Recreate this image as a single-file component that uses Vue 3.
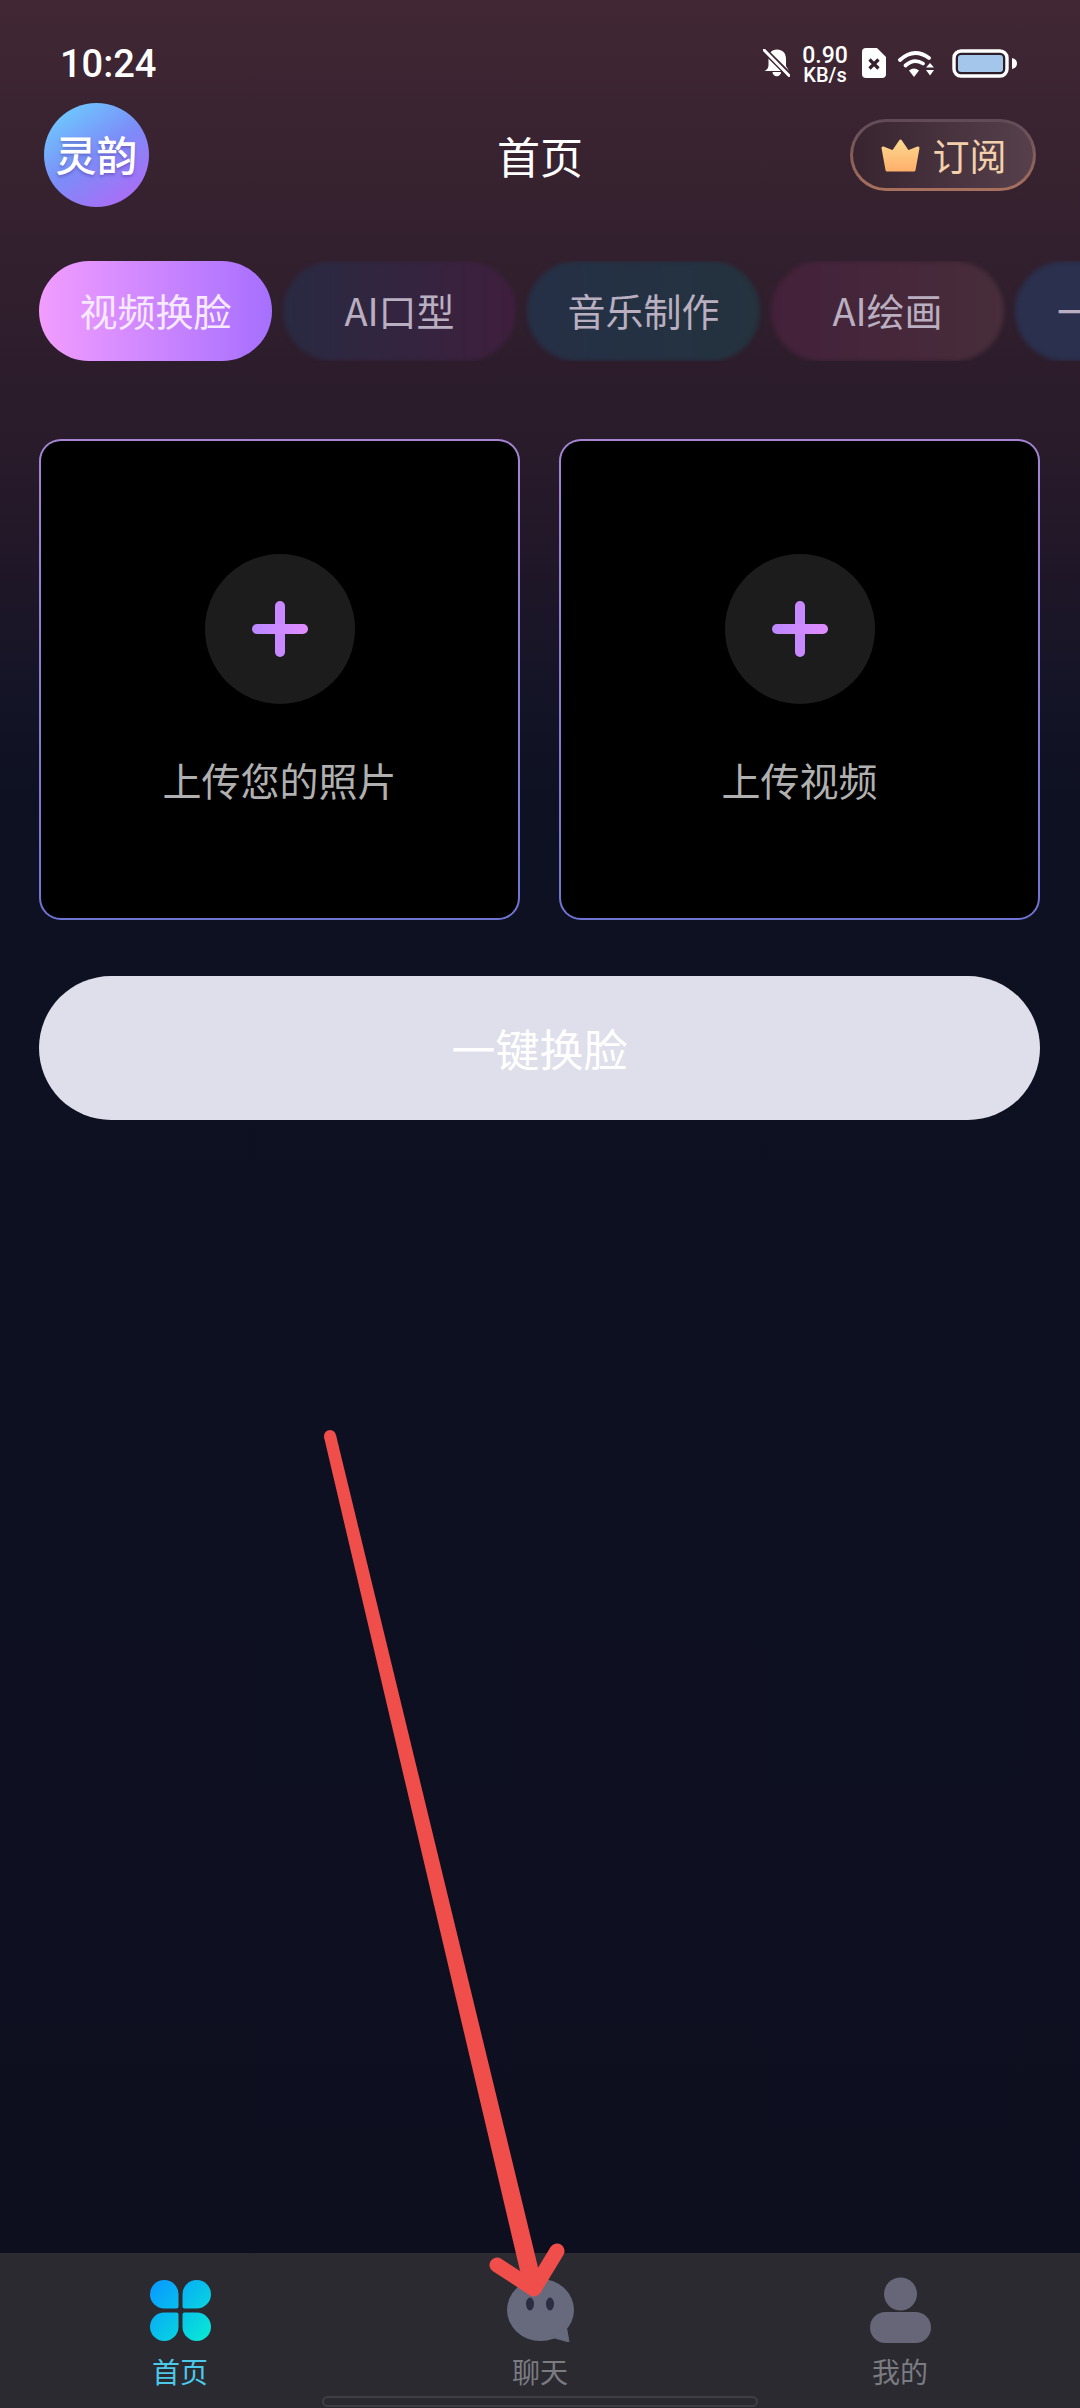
<template>
  <div class="page">
    <!-- status bar -->
    <div class="status-bar">
      <span class="time">10:24</span>
      <div class="status-icons">
        <svg class="ic-bell" width="27" height="28" viewBox="0 0 27 28">
          <path d="M14 0.500c5.500 0 9 3.500 9 9.500v7l3 5H1.500c2.500-1 4-3 4-6v-6c0-5.500 3-9.500 8.500-9.500z" fill="#fff" />
          <path d="M9.500 23h8.500a4.200 4.200 0 0 1-8.500 0z" fill="#fff" />
          <path d="M-1-1L27 27" stroke="#3c2531" stroke-width="6" />
          <path d="M1 1L26 26.500" stroke="#fff" stroke-width="3" stroke-linecap="round" />
        </svg>
        <div class="speed">
          <span class="speed-num">0.90</span>
          <span class="speed-unit">KB/s</span>
        </div>
        <svg class="ic-sim" width="24" height="30" viewBox="0 0 24 30">
          <path d="M4 0h11l9 9v17a4 4 0 0 1-4 4H4a4 4 0 0 1-4-4V4a4 4 0 0 1 4-4z" fill="#fff" />
          <path d="M7.500 11.500l9 9M16.500 11.500l-9 9" stroke="#35212c" stroke-width="3.200" />
        </svg>
        <svg class="ic-wifi" width="37" height="27" viewBox="0 0 37 27">
          <path d="M2 10Q16-3 31 8" fill="none" stroke="#fff" stroke-width="3.800" stroke-linecap="round" />
          <path d="M7.500 15.500Q16 8 25 13.500" fill="none" stroke="#fff" stroke-width="3.800" stroke-linecap="round" />
          <path d="M11 20.500Q16 16.500 21 20.500L16 27z" fill="#fff" />
          <path d="M28 17.500l4-4.500 4 4.500zM28 20h8l-4 5.500z" fill="#fff" />
        </svg>
        <svg class="ic-battery" width="65" height="29" viewBox="0 0 65 29">
          <rect x="2" y="2" width="53" height="25" rx="7" fill="#2c1f2a" stroke="#fff" stroke-width="3.400" />
          <rect x="6" y="6" width="45" height="17" rx="3" fill="#a4c6ea" />
          <path d="M60 9c3 .5 5 2.500 5 5.500s-2 5-5 5.500z" fill="#fff" />
        </svg>
      </div>
    </div>

    <!-- header -->
    <header class="top-bar">
      <div class="avatar"><span>灵韵</span></div>
      <h1 class="title">首页</h1>
      <div class="subscribe">
        <svg width="41" height="35" viewBox="0 0 41 35">
          <defs>
            <linearGradient id="crown" gradientUnits="userSpaceOnUse" x1="0" y1="2" x2="0" y2="33">
              <stop offset="0" stop-color="#fbd890" />
              <stop offset="1" stop-color="#ffb06a" />
            </linearGradient>
          </defs>
          <path d="M3 10L13 14 20.500 3 28 14 38 10 34 32H7z" fill="url(#crown)" stroke="url(#crown)" stroke-width="3" stroke-linejoin="round" />
        </svg>
        <span>订阅</span>
      </div>
    </header>

    <!-- function tabs -->
    <div class="tabs">
      <div v-for="tab in tabs" :key="tab.name" class="tab" :class="tab.cls">
        <span class="tab-text">{{ tab.name }}</span>
      </div>
    </div>

    <!-- upload cards -->
    <div class="cards">
      <div v-for="card in cards" :key="card" class="card">
        <div class="plus-circle">
          <svg width="56" height="56" viewBox="0 0 56 56">
            <defs>
              <linearGradient id="plus" x1="0" y1="0" x2="1" y2="0">
                <stop offset="0" stop-color="#bb88ff" />
                <stop offset="1" stop-color="#e08cff" />
              </linearGradient>
            </defs>
            <rect x="23" y="0" width="10" height="56" rx="5" fill="#c888ff" />
            <rect x="0" y="23" width="56" height="10" rx="5" fill="url(#plus)" />
          </svg>
        </div>
        <div class="card-label">{{ card }}</div>
      </div>
    </div>

    <div class="action-btn"><span>一键换脸</span></div>

    <div class="spacer"></div>

    <!-- bottom nav -->
    <nav class="bottom-nav">
      <div class="nav-item active">
        <div class="nav-icon">
          <svg width="61" height="61" viewBox="0 0 61 61">
            <defs>
              <linearGradient id="clover" gradientUnits="userSpaceOnUse" x1="4" y1="4" x2="57" y2="57">
                <stop offset="0" stop-color="#089cff" />
                <stop offset="1" stop-color="#08e6d6" />
              </linearGradient>
            </defs>
            <g fill="url(#clover)">
              <path d="M14.250 0A14.250 14.250 0 0 1 28.500 14.250V26.500a2 2 0 0 1-2 2H14.250A14.250 14.250 0 0 1 14.250 0z" />
              <path d="M46.750 0A14.250 14.250 0 0 1 46.750 28.500H34.500a2 2 0 0 1-2-2V14.250A14.250 14.250 0 0 1 46.750 0z" />
              <path d="M14.250 32.500H26.500a2 2 0 0 1 2 2V46.750A14.250 14.250 0 0 1 0 46.750A14.250 14.250 0 0 1 14.250 32.500z" />
              <path d="M34.500 32.500H46.750A14.250 14.250 0 0 1 46.750 61A14.250 14.250 0 0 1 32.500 46.750V34.500a2 2 0 0 1 2-2z" />
            </g>
          </svg>
        </div>
        <span class="nav-label">首页</span>
      </div>
      <div class="nav-item">
        <div class="nav-icon">
          <svg width="67" height="63" viewBox="0 0 67 63">
            <ellipse cx="33.500" cy="31" rx="33.500" ry="31" fill="#666a7c" />
            <path d="M44 58L62 63 59 46z" fill="#666a7c" stroke="#666a7c" stroke-width="1" stroke-linejoin="round" />
            <ellipse cx="23" cy="25" rx="4" ry="6.500" fill="#2b2d42" />
            <ellipse cx="43" cy="25" rx="4" ry="6.500" fill="#2b2d42" />
          </svg>
        </div>
        <span class="nav-label">聊天</span>
      </div>
      <div class="nav-item">
        <div class="nav-icon">
          <svg width="61" height="66" viewBox="0 0 61 66">
            <circle cx="30.500" cy="17" r="16.500" fill="#666678" />
            <rect x="0" y="35" width="61" height="31" rx="15.500" fill="#666678" />
          </svg>
        </div>
        <span class="nav-label">我的</span>
      </div>
    </nav>
    <div class="home-bar"></div>

    <!-- red annotation arrow over the page -->
    <svg class="arrow" width="1080" height="2408" viewBox="0 0 1080 2408">
      <circle cx="330" cy="1436" r="6" fill="#f04e4a" />
      <path d="M336 1435L324 1437 525 2292 543 2288z" fill="#f04e4a" />
      <path d="M497 2265L534 2289 557 2251" fill="none" stroke="#f04e4a" stroke-width="15" stroke-linecap="round" stroke-linejoin="round" />
    </svg>
  </div>
</template>

<script setup>
const tabs = [
  { name: '视频换脸', cls: 'tab-active' },
  { name: 'AI口型', cls: 'tab-violet' },
  { name: '音乐制作', cls: 'tab-teal' },
  { name: 'AI绘画', cls: 'tab-rose' },
  { name: '一键高清', cls: 'tab-blue' },
]

const cards = ['上传您的照片', '上传视频']
</script>

<style>
html,
body {
  margin: 0;
  background: #0d0f1f;
}
</style>

<style scoped>
.page {
  position: relative;
  width: 1080px;
  height: 2408px;
  overflow: hidden;
  display: flex;
  flex-direction: column;
  font-family: "Noto Sans CJK SC", "Noto Sans", sans-serif;
  color: #fff;
  background: linear-gradient(180deg, #412734 0, #33202e 245px, #291b2a 440px, #201728 560px, #131426 700px, #0e1122 800px, #0d0f1f 2408px);
}

.status-bar {
  height: 103px;
  box-sizing: border-box;
  padding: 46px 63px 0 60px;
  display: flex;
  justify-content: space-between;
  align-items: flex-start;
}

.time {
  font-family: Roboto, sans-serif;
  font-size: 38px;
  font-weight: 500;
  line-height: 36px;
}

.status-icons {
  display: flex;
  align-items: center;
  height: 36px;
  margin-top: -1px;
}

.ic-bell {
  margin-right: 12px;
}

.speed {
  display: flex;
  flex-direction: column;
  align-items: center;
  width: 46px;
  margin: 4px 14px 0 0;
  font-family: Roboto, sans-serif;
  font-weight: 500;
}

.speed-num {
  font-size: 23px;
  line-height: 20px;
}

.speed-unit {
  font-size: 20px;
  line-height: 19px;
}

.ic-sim {
  margin-right: 12px;
}

.ic-wifi {
  margin-right: 17px;
}

.top-bar {
  display: grid;
  grid-template-columns: 1fr auto 1fr;
  align-items: center;
  padding: 0 44px;
  height: 104px;
}

.avatar {
  width: 105px;
  height: 104px;
  border-radius: 50%;
  display: flex;
  align-items: center;
  justify-content: center;
  font-size: 41px;
  font-weight: 500;
  background: linear-gradient(145deg, #6cd0ff 5%, #7c8cf8 50%, #b268f6 95%);
  text-shadow: 0 2px 3px rgba(60, 30, 120, 0.35);
}

.avatar span {
  margin-top: -4px;
}

.title {
  margin: 0;
  font-size: 43px;
  font-weight: 400;
  line-height: 56px;
}

.subscribe {
  justify-self: end;
  width: 186px;
  height: 72px;
  box-sizing: border-box;
  border: 3px solid transparent;
  border-radius: 36px;
  display: flex;
  align-items: center;
  justify-content: center;
  gap: 12px;
  color: #f3d0ac;
  font-size: 37px;
  background:
    linear-gradient(90deg, #38242f, #55404b) padding-box,
    linear-gradient(180deg, #5e4a56, #a9715d) border-box;
}

.tabs {
  display: flex;
  gap: 11px;
  margin-top: 54px;
  padding-left: 39px;
  overflow: hidden;
}

.tab {
  position: relative;
  flex: 0 0 233px;
  height: 100px;
  display: flex;
  align-items: center;
  justify-content: center;
  font-size: 38px;
  color: #b9afc1;
}

/* soft pill behind the label, blurred edge on the inactive ones */
.tab::before {
  content: "";
  position: absolute;
  inset: 0;
  border-radius: 50px;
  filter: blur(2px);
}

.tab-text {
  position: relative;
  margin-top: -3px;
}

.tab-active {
  color: #f7e9ff;
}

.tab-active::before {
  background: linear-gradient(90deg, #f29dff, #a66fff);
  filter: none;
}

.tab-violet::before {
  background: linear-gradient(90deg, #292a42, #3e1f3d);
}

.tab-teal::before {
  background: linear-gradient(90deg, #253047, #24333e);
}

.tab-rose::before {
  background: linear-gradient(90deg, #43213a, #482d3a);
}

.tab-blue {
  justify-content: flex-start;
  padding-left: 42px;
}

.tab-blue::before {
  background: linear-gradient(90deg, #2a304e, #2c2f4a);
}

.cards {
  display: grid;
  grid-template-columns: 481px 481px;
  gap: 39px;
  margin-top: 78px;
  padding-left: 39px;
}

.card {
  height: 481px;
  box-sizing: border-box;
  border: 2px solid transparent;
  border-radius: 22px;
  display: flex;
  flex-direction: column;
  align-items: center;
  padding-top: 113px;
  background:
    linear-gradient(#000, #000) padding-box,
    linear-gradient(180deg, #a584d2, #6f74d2) border-box;
}

.plus-circle {
  width: 150px;
  height: 150px;
  border-radius: 50%;
  background: #1c1c1c;
  display: flex;
  align-items: center;
  justify-content: center;
}

.card-label {
  margin-top: 53px;
  font-size: 39px;
  line-height: 44px;
  color: #b0b0b0;
}

.action-btn {
  margin: 56px 40px 0 39px;
  height: 144px;
  border-radius: 72px;
  background: #dfdfeb;
  display: flex;
  align-items: center;
  justify-content: center;
  font-size: 44px;
  color: #fff;
}

.spacer {
  flex: 1;
}

.bottom-nav {
  height: 155px;
  box-sizing: border-box;
  padding-top: 24px;
  display: grid;
  grid-template-columns: repeat(3, 1fr);
  background: #2a2a30;
}

.nav-item {
  display: flex;
  flex-direction: column;
  align-items: center;
}

.nav-icon {
  height: 66px;
  display: flex;
  align-items: center;
  justify-content: center;
}

.nav-label {
  margin-top: 14px;
  font-size: 28px;
  line-height: 28px;
  color: #7b7b82;
}

.active .nav-label {
  color: #4cc8e8;
}

.home-bar {
  position: absolute;
  left: 322px;
  bottom: 1px;
  width: 436px;
  height: 11px;
  box-sizing: border-box;
  border: 2px solid #3e3e44;
  border-radius: 6px;
}

.arrow {
  position: absolute;
  left: 0;
  top: 0;
  pointer-events: none;
}
</style>
